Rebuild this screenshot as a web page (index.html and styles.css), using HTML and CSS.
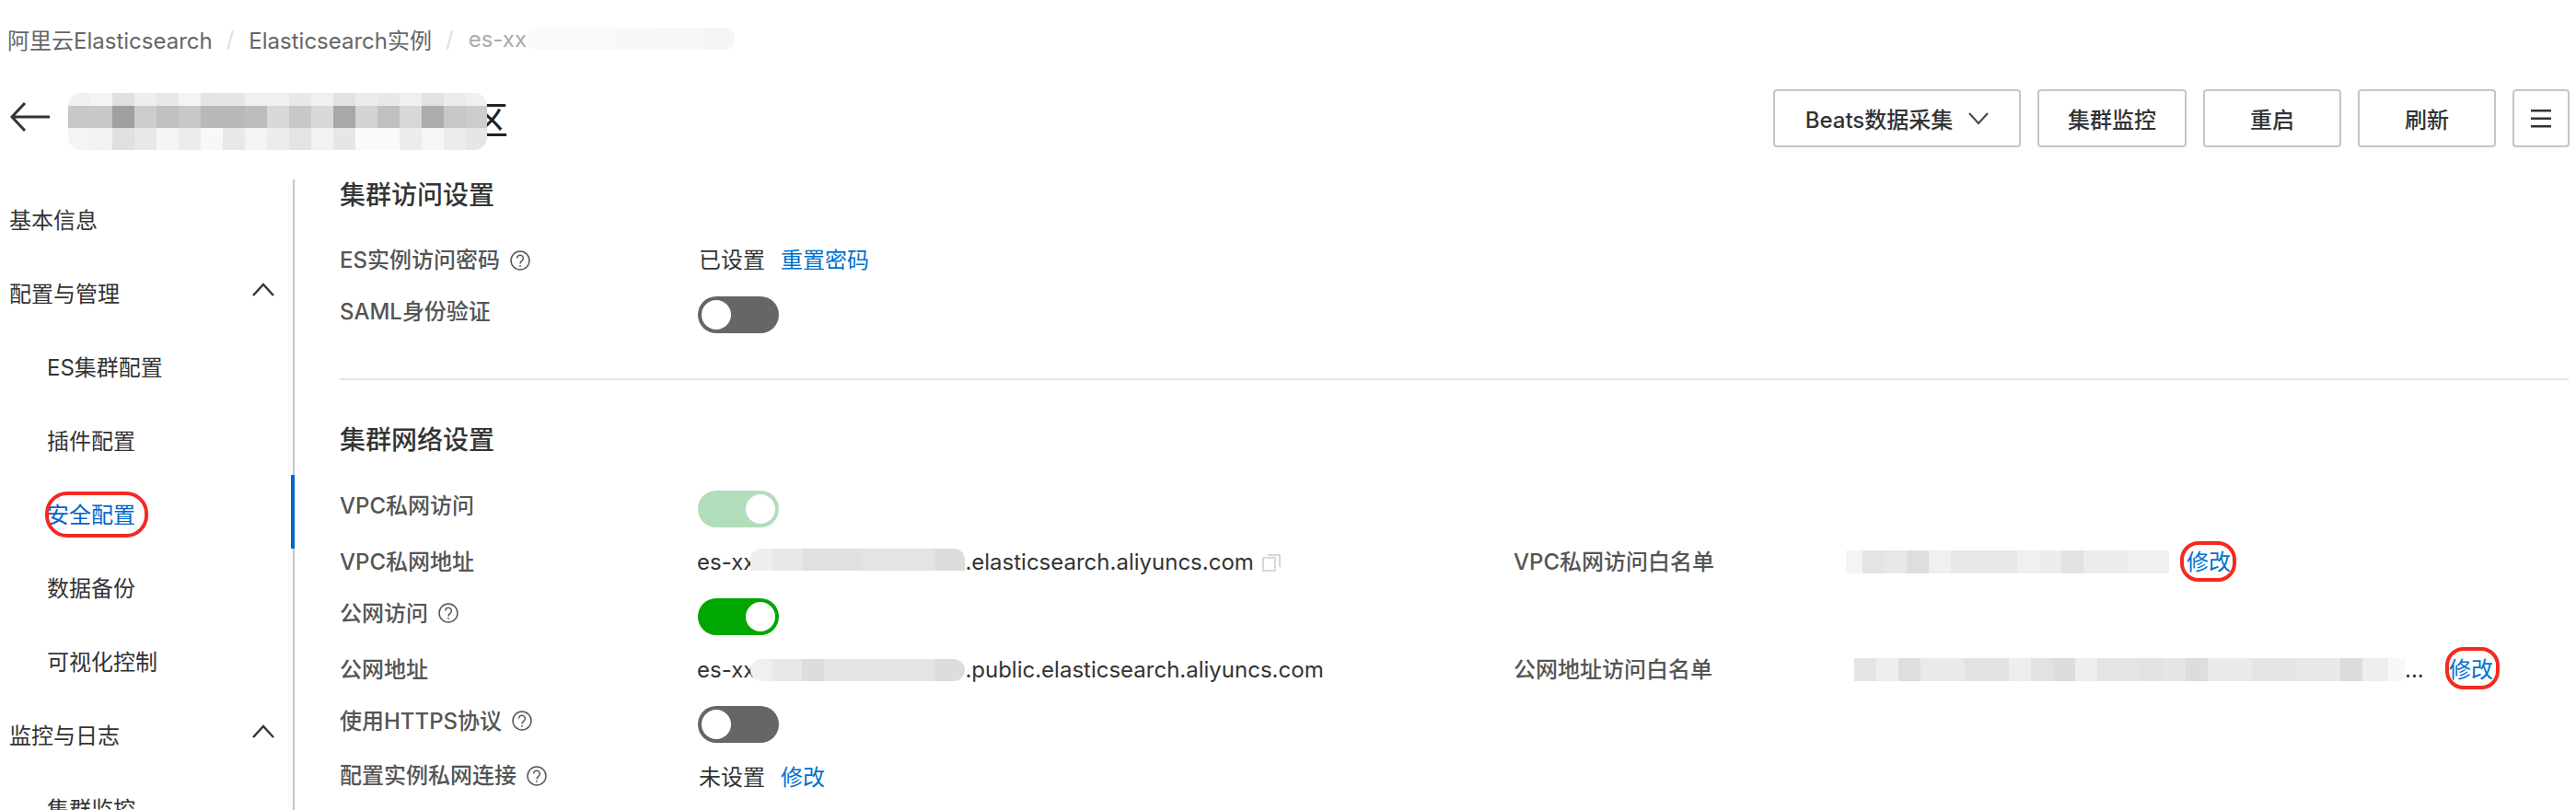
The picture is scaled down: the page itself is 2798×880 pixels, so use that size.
FILE: index.html
```html
<!DOCTYPE html>
<html lang="zh-CN">
<head>
<meta charset="utf-8">
<title>安全配置</title>
<link rel="stylesheet" href="styles.css">
</head>
<body>
<div class="page">
  <nav class="crumbs">
    <a class="crumb">阿里云Elasticsearch</a><span class="sep">/</span>
    <a class="crumb">Elasticsearch实例</a><span class="sep">/</span>
    <span class="crumb-last">es-xx</span><span class="mosaic m-crumb"></span>
  </nav>
  <header class="titlebar">
    <div class="title-left">
      <svg class="back" width="44" height="34" viewBox="0 0 44 34" fill="none" stroke="#333" stroke-width="3"><path d="M43 17H3M16 2 2 17l14 15"/></svg>
      <div class="title"><span class="title-text">区</span><span class="mosaic m-title"></span></div>
    </div>
    <div class="actions">
      <button class="btn btn-beats">Beats数据采集
        <svg width="22" height="14" viewBox="0 0 22 14" fill="none" stroke="#444" stroke-width="2"><path d="M1 1l10 11L21 1"/></svg>
      </button>
      <button class="btn btn-monitor">集群监控</button>
      <button class="btn btn-std">重启</button>
      <button class="btn btn-std">刷新</button>
      <button class="btn btn-menu">
        <svg width="22" height="22" viewBox="0 0 22 22" fill="#333"><rect y="1" width="22" height="2.5"/><rect y="9.5" width="22" height="2.5"/><rect y="18" width="22" height="2.5"/></svg>
      </button>
    </div>
  </header>
  <div class="main">
    <aside class="side">
      <div class="side-item">基本信息</div>
      <div class="side-item side-group">配置与管理
        <svg width="24" height="15" viewBox="0 0 24 15" fill="none" stroke="#333" stroke-width="2.4"><path d="M1 14 12 2l11 12"/></svg>
      </div>
      <div class="side-item side-child">ES集群配置</div>
      <div class="side-item side-child">插件配置</div>
      <div class="side-item side-child side-active"><span class="mark-nav">安全配置</span></div>
      <div class="side-item side-child">数据备份</div>
      <div class="side-item side-child">可视化控制</div>
      <div class="side-item side-group">监控与日志
        <svg width="24" height="15" viewBox="0 0 24 15" fill="none" stroke="#333" stroke-width="2.4"><path d="M1 14 12 2l11 12"/></svg>
      </div>
      <div class="side-item side-child">集群监控</div>
    </aside>
    <main class="content">
      <section class="section-access">
        <h2 class="heading">集群访问设置</h2>
        <div class="form">
          <div class="row row-text">
            <div class="label">ES实例访问密码
              <svg class="help" width="22" height="22" viewBox="0 0 22 22" fill="none" stroke="#555" stroke-width="1.5"><circle cx="11" cy="11" r="10"/><path d="M7.6 8.6a3.4 3.4 0 1 1 5.3 2.8c-1.3.9-1.9 1.5-1.9 3"/><path d="M11 16v1.8"/></svg>
            </div>
            <div class="value">已设置<a class="link link-gap">重置密码</a></div>
          </div>
          <div class="row">
            <div class="label">SAML身份验证</div>
            <div class="toggle toggle-off"><i class="thumb"></i></div>
          </div>
        </div>
      </section>
      <section class="section-net">
        <h2 class="heading">集群网络设置</h2>
        <div class="form form-net">
          <div class="row">
            <div class="label">VPC私网访问</div>
            <div class="toggle toggle-on toggle-dim"><i class="thumb"></i></div>
          </div>
          <div class="row row-text">
            <div class="label">VPC私网地址</div>
            <div class="value value-host">es-xx<span class="mosaic m-vpc"></span>.elasticsearch.aliyuncs.com
              <svg class="copy" width="20" height="20" viewBox="0 0 20 20" fill="none" stroke="#ccc" stroke-width="1.5"><rect x="1" y="5" width="13" height="14"/><path d="M6 2h13v13"/></svg>
            </div>
            <div class="label">VPC私网访问白名单</div>
            <div class="value value-list"><span class="mosaic m-white1"></span><a class="link link-mark link-first">修改</a></div>
          </div>
          <div class="row">
            <div class="label">公网访问
              <svg class="help" width="22" height="22" viewBox="0 0 22 22" fill="none" stroke="#555" stroke-width="1.5"><circle cx="11" cy="11" r="10"/><path d="M7.6 8.6a3.4 3.4 0 1 1 5.3 2.8c-1.3.9-1.9 1.5-1.9 3"/><path d="M11 16v1.8"/></svg>
            </div>
            <div class="toggle toggle-on"><i class="thumb"></i></div>
          </div>
          <div class="row row-text">
            <div class="label">公网地址</div>
            <div class="value value-host">es-xx<span class="mosaic m-pub"></span>.public.elasticsearch.aliyuncs.com</div>
            <div class="label">公网地址访问白名单</div>
            <div class="value value-list value-list2"><span class="mosaic m-white2"></span><span class="ellipsis">...</span><a class="link link-mark link-second">修改</a></div>
          </div>
          <div class="row">
            <div class="label">使用HTTPS协议
              <svg class="help" width="22" height="22" viewBox="0 0 22 22" fill="none" stroke="#555" stroke-width="1.5"><circle cx="11" cy="11" r="10"/><path d="M7.6 8.6a3.4 3.4 0 1 1 5.3 2.8c-1.3.9-1.9 1.5-1.9 3"/><path d="M11 16v1.8"/></svg>
            </div>
            <div class="toggle toggle-off"><i class="thumb"></i></div>
          </div>
          <div class="row">
            <div class="label label-last">配置实例私网连接
              <svg class="help" width="22" height="22" viewBox="0 0 22 22" fill="none" stroke="#555" stroke-width="1.5"><circle cx="11" cy="11" r="10"/><path d="M7.6 8.6a3.4 3.4 0 1 1 5.3 2.8c-1.3.9-1.9 1.5-1.9 3"/><path d="M11 16v1.8"/></svg>
            </div>
            <div class="value">未设置<a class="link link-gap">修改</a></div>
          </div>
        </div>
      </section>
    </main>
  </div>
</div>
</body>
</html>
```
FILE: styles.css
```css
* { box-sizing: border-box; }
html, body { margin: 0; background: #fff; }
body {
  font-family: Inter, "Noto Sans CJK SC", sans-serif;
  font-size: 24px;
  color: #333;
}
.page { height: 880px; overflow: hidden; }

/* breadcrumb */
.crumbs {
  display: flex;
  align-items: center;
  height: 34px;
  margin-top: 25px;
  padding-left: 8px;
  color: #666;
}
.sep { color: #ddd; margin: 0 16px 0 15px; }
.crumb-last { color: #aaa; }
.m-crumb {
  width: 226px;
  height: 24px;
  border-radius: 10px;
  background: linear-gradient(90deg, #fafafa 0 96px, #f8f8f8 96px 144px, #f7f7f7 144px 192px, #f5f5f5 192px);
}

/* title bar */
.titlebar {
  display: flex;
  justify-content: space-between;
  margin-top: 38px;
  padding: 0 7px 0 11px;
  height: 63px;
}
.title-left { display: flex; align-items: center; margin-top: -3px; }
.back { margin-right: 19px; }
.title {
  position: relative;
  width: 478px;
  height: 62px;
  margin-top: 9px;
  text-align: right;
  font-size: 40px;
  line-height: 60px;
  color: #222;
}
.mosaic { display: inline-block; }
.m-title {
  position: absolute;
  left: 0;
  top: 0;
  width: 455px;
  height: 62px;
  border-radius: 14px;
  background:
    linear-gradient(90deg, #f0f0f0 0 24px,#f4f4f4 24px 48px,#e0e0e0 48px 72px,#eee 72px 96px,#e8e8e8 96px 120px,#f4f4f4 120px 144px,#e4e4e4 144px 168px,#e6e6e6 168px 192px,#f0f0f0 192px 240px,#e8e8e8 240px 264px,#f0f0f0 264px 288px,#e2e2e2 288px 312px,#ececec 312px 336px,#e8e8e8 336px 360px,#f0f0f0 360px 384px,#e2e2e2 384px 408px,#ececec 408px 432px,#f0f0f0 432px) 0 0/100% 14px no-repeat,
    linear-gradient(90deg, #c8c8c8 0 48px,#a0a0a0 48px 72px,#ccc 72px 96px,#c0c0c0 96px 120px,#c8c8c8 120px 144px,#b8b8b8 144px 192px,#bcbcbc 192px 216px,#d8d8d8 216px 240px,#c8c8c8 240px 264px,#d8d8d8 264px 288px,#a8a8a8 288px 312px,#d4d4d4 312px 336px,#c0c0c0 336px 360px,#d8d8d8 360px 384px,#acacac 384px 408px,#c8c8c8 408px 432px,#ccc 432px) 0 14px/100% 24px no-repeat,
    linear-gradient(90deg, #f4f4f4 0 24px,#f2f2f2 24px 48px,#e0e0e0 48px 72px,#e8e8e8 72px 96px,#f4f4f4 96px 120px,#ececec 120px 144px,#f8f8f8 144px 168px,#e8e8e8 168px 192px,#f4f4f4 192px 216px,#ececec 216px 240px,#e4e4e4 240px 264px,#f2f2f2 264px 288px,#e6e6e6 288px 312px,#fafafa 312px 360px,#ececec 360px 384px,#f6f6f6 384px 408px,#ececec 408px 432px,#e6e6e6 432px) 0 38px/100% 24px no-repeat;
}

/* action buttons */
.actions { display: flex; gap: 18px; }
.btn {
  display: flex;
  align-items: center;
  justify-content: center;
  gap: 17px;
  height: 63px;
  padding: 0;
  border: 2px solid #c0c6cc;
  border-radius: 4px;
  background: #fff;
  font: 500 24px Inter, "Noto Sans CJK SC", sans-serif;
  color: #333;
}
.btn-beats { width: 269px; }
.btn-monitor { width: 162px; }
.btn-std { width: 150px; }
.btn-menu { width: 62px; }

/* layout */
.main { display: flex; margin-top: 35px; }
.side {
  flex: none;
  width: 320px;
  height: 690px;
  padding-top: 2px;
  border-right: 2px solid #c0c6cc;
}
.side-item {
  position: relative;
  display: flex;
  align-items: center;
  height: 80px;
  padding-left: 10px;
  padding-right: 20px;
}
.side-group { justify-content: space-between; }
.side-group svg { margin-top: -6px; }
.side-child { padding-left: 51px; }
.side-active { color: #0064c8; }
.side-active::after {
  content: "";
  position: absolute;
  right: -2px;
  top: -1px;
  width: 4px;
  height: 80px;
  background: #0064c8;
}
.mark-nav { position: relative; }
.mark-nav::after {
  content: "";
  position: absolute;
  left: -2px;
  right: -14px;
  top: -6px;
  bottom: -9px;
  border: 4px solid #f32a22;
  border-radius: 24px;
}

.content { flex: 1; padding-left: 49px; padding-right: 8px; }
.heading {
  margin: 0;
  font-size: 28px;
  line-height: 34px;
  font-weight: 500;
  color: #333;
}
.section-access { padding-bottom: 49px; border-bottom: 2px solid #e3e3e3; }
.section-net { padding-top: 48px; }
.form {
  display: grid;
  grid-auto-rows: 40px;
  row-gap: 18.5px;
  margin-top: 34px;
}
.form-net { margin-top: 38px; }
.row {
  display: grid;
  grid-template-columns: 390px 885px 361px 1fr;
  align-items: start;
}
.label {
  display: flex;
  align-items: center;
  gap: 11px;
  line-height: 33px;
  color: #555;
  font-weight: 500;
}
.row-text .label { line-height: 39px; }
.label-last { line-height: 36px; }
.help { flex: none; }
.value { display: flex; align-items: center; line-height: 39px; color: #333; }
.value-host { margin-left: -2px; }
.copy { margin-left: 9px; }
.link { color: #0070cc; }
.link-gap { margin-left: 17px; }
.link-mark { position: relative; }
.link-mark::after {
  content: "";
  position: absolute;
  left: -7px;
  right: -6px;
  top: -3px;
  bottom: -2px;
  border: 4px solid #f32a22;
  border-radius: 20px;
}
.link-second::after { left: -4px; right: -7px; top: -5px; bottom: -2px; }
.link-first { margin-left: 19px; }
.link-second { margin-left: 28px; }
.ellipsis { width: 20px; color: #333; }
.value-list2 { padding-left: 9px; }

.toggle {
  position: relative;
  width: 88px;
  height: 40px;
  border-radius: 20px;
  margin-left: -1px;
}
.toggle-off { background: #666; }
.toggle-on { background: #00a700; }
.toggle-dim { background: #b0ddba; }
.thumb {
  position: absolute;
  top: 4px;
  left: 4px;
  width: 32px;
  height: 32px;
  border-radius: 50%;
  background: #fff;
}
.toggle-on .thumb { left: auto; right: 4px; }

.m-vpc, .m-pub { width: 233px; height: 24px; margin-left: -5px; border-radius: 12px 12px 0 0; }
.m-vpc { background: linear-gradient(90deg,#eee 0 24px,#e8e8e8 24px 56px,#e0e0e0 56px 120px,#e4e4e4 120px 200px,#ddd 200px); margin-bottom: 6px; }
.m-pub { background: linear-gradient(90deg,#f0f0f0 0 24px,#e8e8e8 24px 56px,#ddd 56px 80px,#e4e4e4 80px 200px,#ddd 200px); border-radius: 12px; }
.m-white1 {
  width: 351px;
  height: 25px;
  background: linear-gradient(90deg,#f4f4f4 0 18px,#e4e4e4 18px 42px,#e8e8e8 42px 66px,#dedede 66px 90px,#f0f0f0 90px 114px,#e8e8e8 114px 186px,#f0f0f0 186px 210px,#ececec 210px 234px,#e2e2e2 234px 258px,#ececec 258px 306px,#f0f0f0 306px);
}
.m-white2 {
  width: 598px;
  height: 25px;
  background: linear-gradient(90deg,#e4e4e4 0 24px,#eee 24px 48px,#dedede 48px 72px,#eaeaea 72px 120px,#e2e2e2 120px 168px,#eee 168px 192px,#e2e2e2 192px 216px,#ddd 216px 240px,#eee 240px 264px,#e4e4e4 264px 312px,#e2e2e2 312px 336px,#e6e6e6 336px 360px,#ddd 360px 384px,#eaeaea 384px 432px,#e4e4e4 432px 480px,#e8e8e8 480px 528px,#dcdcdc 528px 552px,#eee 552px 580px,#f8f8f8 580px);
}
```
